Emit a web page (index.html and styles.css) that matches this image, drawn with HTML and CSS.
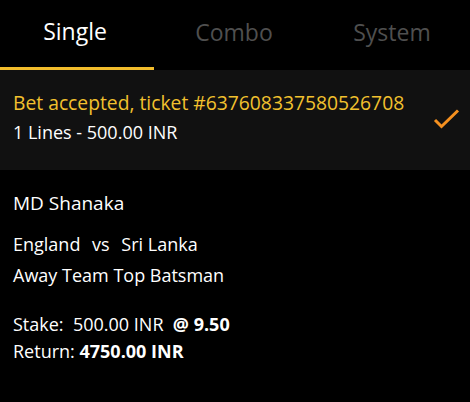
FILE: index.html
```html
<!DOCTYPE html>
<html>
<head>
<meta charset="utf-8">
<link rel="stylesheet" href="styles.css">
</head>
<body>
<div class="tabs">
  <div class="tab active">Single</div>
  <div class="tab">Combo</div>
  <div class="tab">System</div>
</div>
<div class="accepted">
  <div class="acc-text">
    <div class="acc-title">Bet accepted, ticket #637608337580526708</div>
    <div class="acc-lines">1 Lines - 500.00 INR</div>
  </div>
  <svg class="check" width="30" height="24" viewBox="0 0 30 24"><path d="M3 12 L9.5 18.5 L26 2.5" fill="none" stroke="#f5901f" stroke-width="3"/></svg>
</div>
<div class="details">
  <div class="player">MD Shanaka</div>
  <div class="match">England <span class="vs">vs</span> Sri Lanka</div>
  <div class="market">Away Team Top Batsman</div>
  <div class="stake">Stake:&nbsp; 500.00 INR&nbsp; <b>@ 9.50</b></div>
  <div class="return">Return: <b>4750.00 INR</b></div>
</div>
</body>
</html>
```
FILE: styles.css
```css
html, body { margin: 0; padding: 0; background: #000; }
body { font-family: "Open Sans", sans-serif; color: #fff; width: 470px; height: 402px; overflow: hidden; }
.tabs { display: flex; height: 70px; padding-left: 0; }
.tab { flex: 1; display: flex; align-items: center; justify-content: center; font-size: 23px; color: #4f4f4f; padding-bottom: 6px; padding-left: 2px; box-sizing: border-box; }
.tab.active { color: #fff; border-bottom: 3px solid #f2bd2c; flex: 0 0 154px; padding-left: 0; padding-right: 4px; }
.accepted { background: #111; height: 100px; display: flex; align-items: center; padding: 0 8px 0 13px; box-sizing: border-box; }
.acc-text { flex: 1; margin-top: -5px; }
.acc-title { color: #f2c12e; font-size: 19.3px; line-height: 26px; }
.acc-lines { font-size: 18px; line-height: 26px; margin-top: 3px; }
.check { margin-top: 0; }
.details { padding: 21px 13px 0; font-size: 18px; }
.player { font-size: 19px; line-height: 24px; }
.match { margin-top: 17px; line-height: 24px; }
.vs { margin: 0 7px; }
.market { margin-top: 7px; line-height: 24px; }
.stake { margin-top: 25px; line-height: 24px; }
.return { margin-top: 3px; line-height: 24px; }
b { font-weight: 700; }
```
